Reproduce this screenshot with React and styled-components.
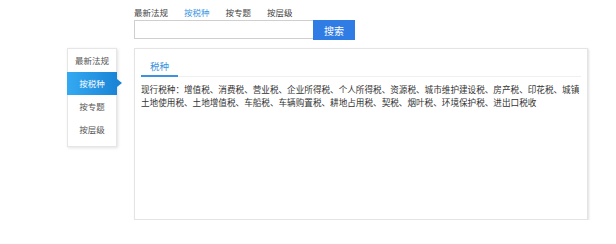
import React from 'react'
import styled, { createGlobalStyle } from 'styled-components'

const GlobalStyle = createGlobalStyle`
  body {
    margin: 0;
    background: #fff;
    font-family: "Noto Sans CJK SC", "Noto Sans", sans-serif;
    color: #444;
  }
`

const topLinks = ['最新法规', '按税种', '按专题', '按层级']
const sideLinks = ['最新法规', '按税种', '按专题', '按层级']
const taxes =
  '现行税种：增值税、消费税、营业税、企业所得税、个人所得税、资源税、城市维护建设税、房产税、印花税、城镇土地使用税、土地增值税、车船税、车辆购置税、耕地占用税、契税、烟叶税、环境保护税、进出口税收'

const App = () => (
  <>
    <GlobalStyle />
    <Header>
      <TopNav>
        {topLinks.map((t, i) => (
          <TopLink key={t} active={i === 1}>
            {t}
          </TopLink>
        ))}
      </TopNav>
      <SearchRow>
        <SearchInput />
        <SearchButton>搜索</SearchButton>
      </SearchRow>
    </Header>
    <Body>
      <Sidebar>
        {sideLinks.map((t, i) => (
          <SideItem key={t} active={i === 1}>
            {t}
          </SideItem>
        ))}
      </Sidebar>
      <Panel>
        <Tabs>
          <Tab>税种</Tab>
        </Tabs>
        <TaxText>{taxes}</TaxText>
      </Panel>
    </Body>
  </>
)

const Header = styled.div`
  padding: 5px 0 0 134px;
`

const TopNav = styled.div`
  display: flex;
  gap: 16px;
  height: 13px;
  align-items: center;
`

const TopLink = styled.a`
  font-size: 8.5px;
  color: ${(p) => (p.active ? '#3a95e0' : '#444')};
  cursor: pointer;
`

const SearchRow = styled.div`
  display: flex;
  margin-top: 2px;
  height: 20px;
`

const SearchInput = styled.input`
  box-sizing: border-box;
  width: 179px;
  height: 19px;
  border: 1px solid #cfcfcf;
  border-right: none;
  padding: 0 4px;
  outline: none;
`

const SearchButton = styled.button`
  width: 42px;
  height: 20px;
  border: none;
  background: #2f7ce4;
  color: #fff;
  font-family: inherit;
  font-size: 10px;
  padding: 0;
`

const Body = styled.div`
  display: flex;
  align-items: flex-start;
  gap: 17px;
  margin: 8px 0 0 67px;
`

const Sidebar = styled.div`
  box-sizing: border-box;
  width: 50px;
  padding-bottom: 5px;
  border: 1px solid #e6e6e6;
  box-shadow: 1px 1px 3px rgba(0, 0, 0, 0.12);
  background: #fff;
`

const SideItem = styled.div`
  position: relative;
  height: 23px;
  line-height: 23px;
  text-align: center;
  font-size: 8.5px;
  color: ${(p) => (p.active ? '#fff' : '#555')};
  background: ${(p) => (p.active ? 'linear-gradient(to right, #34aaf2, #1a84d6)' : 'transparent')};
  margin: ${(p) => (p.active ? '0 -1px' : '0')};

  &::after {
    content: '';
    display: ${(p) => (p.active ? 'block' : 'none')};
    position: absolute;
    right: -5px;
    top: 7px;
    border-style: solid;
    border-width: 4px 0 4px 5px;
    border-color: transparent transparent transparent #1a84d6;
  }
`

const Panel = styled.div`
  box-sizing: border-box;
  width: 454px;
  height: 172px;
  padding: 9px 6px 0 6px;
  border: 1px solid #e4e4e4;
  box-shadow: 1px 1px 2px rgba(0, 0, 0, 0.12);
  background: #fff;
`

const Tabs = styled.div`
  display: flex;
  border-bottom: 1px solid #f0f0f0;
`

const Tab = styled.div`
  width: 37px;
  height: 17px;
  line-height: 17px;
  text-align: center;
  font-size: 9.5px;
  color: #3d92de;
  border-bottom: 2px solid #3d92de;
  margin-bottom: -1px;
`

const TaxText = styled.p`
  margin: 6px 0 0;
  font-size: 8.6px;
  line-height: 13px;
  color: #333;
`

export default App
